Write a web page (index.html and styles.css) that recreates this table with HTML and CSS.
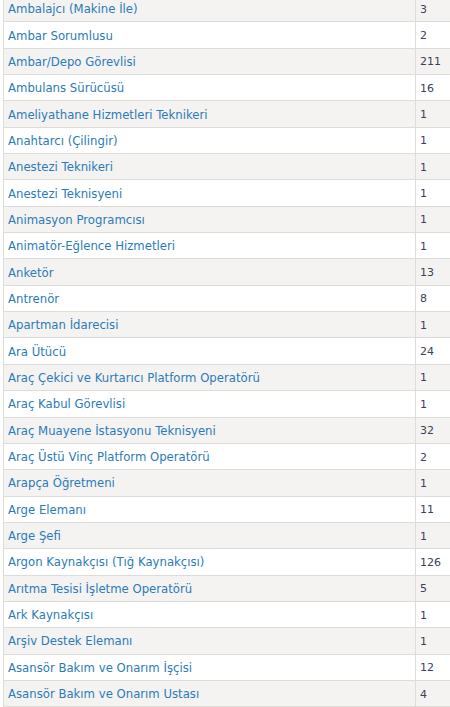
FILE: index.html
```html
<!DOCTYPE html>
<html lang="tr">
<head>
<meta charset="utf-8">
<link rel="stylesheet" href="styles.css">
</head>
<body>
<div class="wrap">
<table class="jobs">
<tbody>
<tr class="odd"><td class="name"><a href="#">Ambalajcı (Makine İle)</a></td><td class="num">3</td></tr>
<tr><td class="name"><a href="#">Ambar Sorumlusu</a></td><td class="num">2</td></tr>
<tr class="odd"><td class="name"><a href="#">Ambar/Depo Görevlisi</a></td><td class="num">211</td></tr>
<tr><td class="name"><a href="#">Ambulans Sürücüsü</a></td><td class="num">16</td></tr>
<tr class="odd"><td class="name"><a href="#">Ameliyathane Hizmetleri Teknikeri</a></td><td class="num">1</td></tr>
<tr><td class="name"><a href="#">Anahtarcı (Çilingir)</a></td><td class="num">1</td></tr>
<tr class="odd"><td class="name"><a href="#">Anestezi Teknikeri</a></td><td class="num">1</td></tr>
<tr><td class="name"><a href="#">Anestezi Teknisyeni</a></td><td class="num">1</td></tr>
<tr class="odd"><td class="name"><a href="#">Animasyon Programcısı</a></td><td class="num">1</td></tr>
<tr><td class="name"><a href="#">Animatör-Eğlence Hizmetleri</a></td><td class="num">1</td></tr>
<tr class="odd"><td class="name"><a href="#">Anketör</a></td><td class="num">13</td></tr>
<tr><td class="name"><a href="#">Antrenör</a></td><td class="num">8</td></tr>
<tr class="odd"><td class="name"><a href="#">Apartman İdarecisi</a></td><td class="num">1</td></tr>
<tr><td class="name"><a href="#">Ara Ütücü</a></td><td class="num">24</td></tr>
<tr class="odd"><td class="name"><a href="#">Araç Çekici ve Kurtarıcı Platform Operatörü</a></td><td class="num">1</td></tr>
<tr><td class="name"><a href="#">Araç Kabul Görevlisi</a></td><td class="num">1</td></tr>
<tr class="odd"><td class="name"><a href="#">Araç Muayene İstasyonu Teknisyeni</a></td><td class="num">32</td></tr>
<tr><td class="name"><a href="#">Araç Üstü Vinç Platform Operatörü</a></td><td class="num">2</td></tr>
<tr class="odd"><td class="name"><a href="#">Arapça Öğretmeni</a></td><td class="num">1</td></tr>
<tr><td class="name"><a href="#">Arge Elemanı</a></td><td class="num">11</td></tr>
<tr class="odd"><td class="name"><a href="#">Arge Şefi</a></td><td class="num">1</td></tr>
<tr><td class="name"><a href="#">Argon Kaynakçısı (Tığ Kaynakçısı)</a></td><td class="num">126</td></tr>
<tr class="odd"><td class="name"><a href="#">Arıtma Tesisi İşletme Operatörü</a></td><td class="num">5</td></tr>
<tr><td class="name"><a href="#">Ark Kaynakçısı</a></td><td class="num">1</td></tr>
<tr class="odd"><td class="name"><a href="#">Arşiv Destek Elemanı</a></td><td class="num">1</td></tr>
<tr><td class="name"><a href="#">Asansör Bakım ve Onarım İşçisi</a></td><td class="num">12</td></tr>
<tr class="odd"><td class="name"><a href="#">Asansör Bakım ve Onarım Ustası</a></td><td class="num">4</td></tr>
</tbody>
</table>
</div>
</body>
</html>
```
FILE: styles.css
```css
html, body {
  margin: 0;
  padding: 0;
  background: #ffffff;
  overflow: hidden;
}
.wrap {
  margin-top: -5px;
  padding-left: 3px;
}
.jobs {
  border-collapse: collapse;
  width: 447px;
  table-layout: fixed;
  font-family: "DejaVu Sans", Verdana, sans-serif;
  font-size: 11.7px;
}
.jobs tr {
  background: #ffffff;
}
.jobs tr.odd {
  background: #f4f3f1;
}
.jobs td {
  border: 1px solid #dddcd9;
  height: 26.35px;
  padding: 1px 0 0 4px;
  vertical-align: middle;
  box-sizing: border-box;
}
.jobs td.name {
  width: 412px;
}
.jobs td.num {
  color: #3b4257;
  font-size: 11px;
  border-right: 0;
}
.jobs a {
  color: #2b7bb9;
  text-decoration: none;
}
```
